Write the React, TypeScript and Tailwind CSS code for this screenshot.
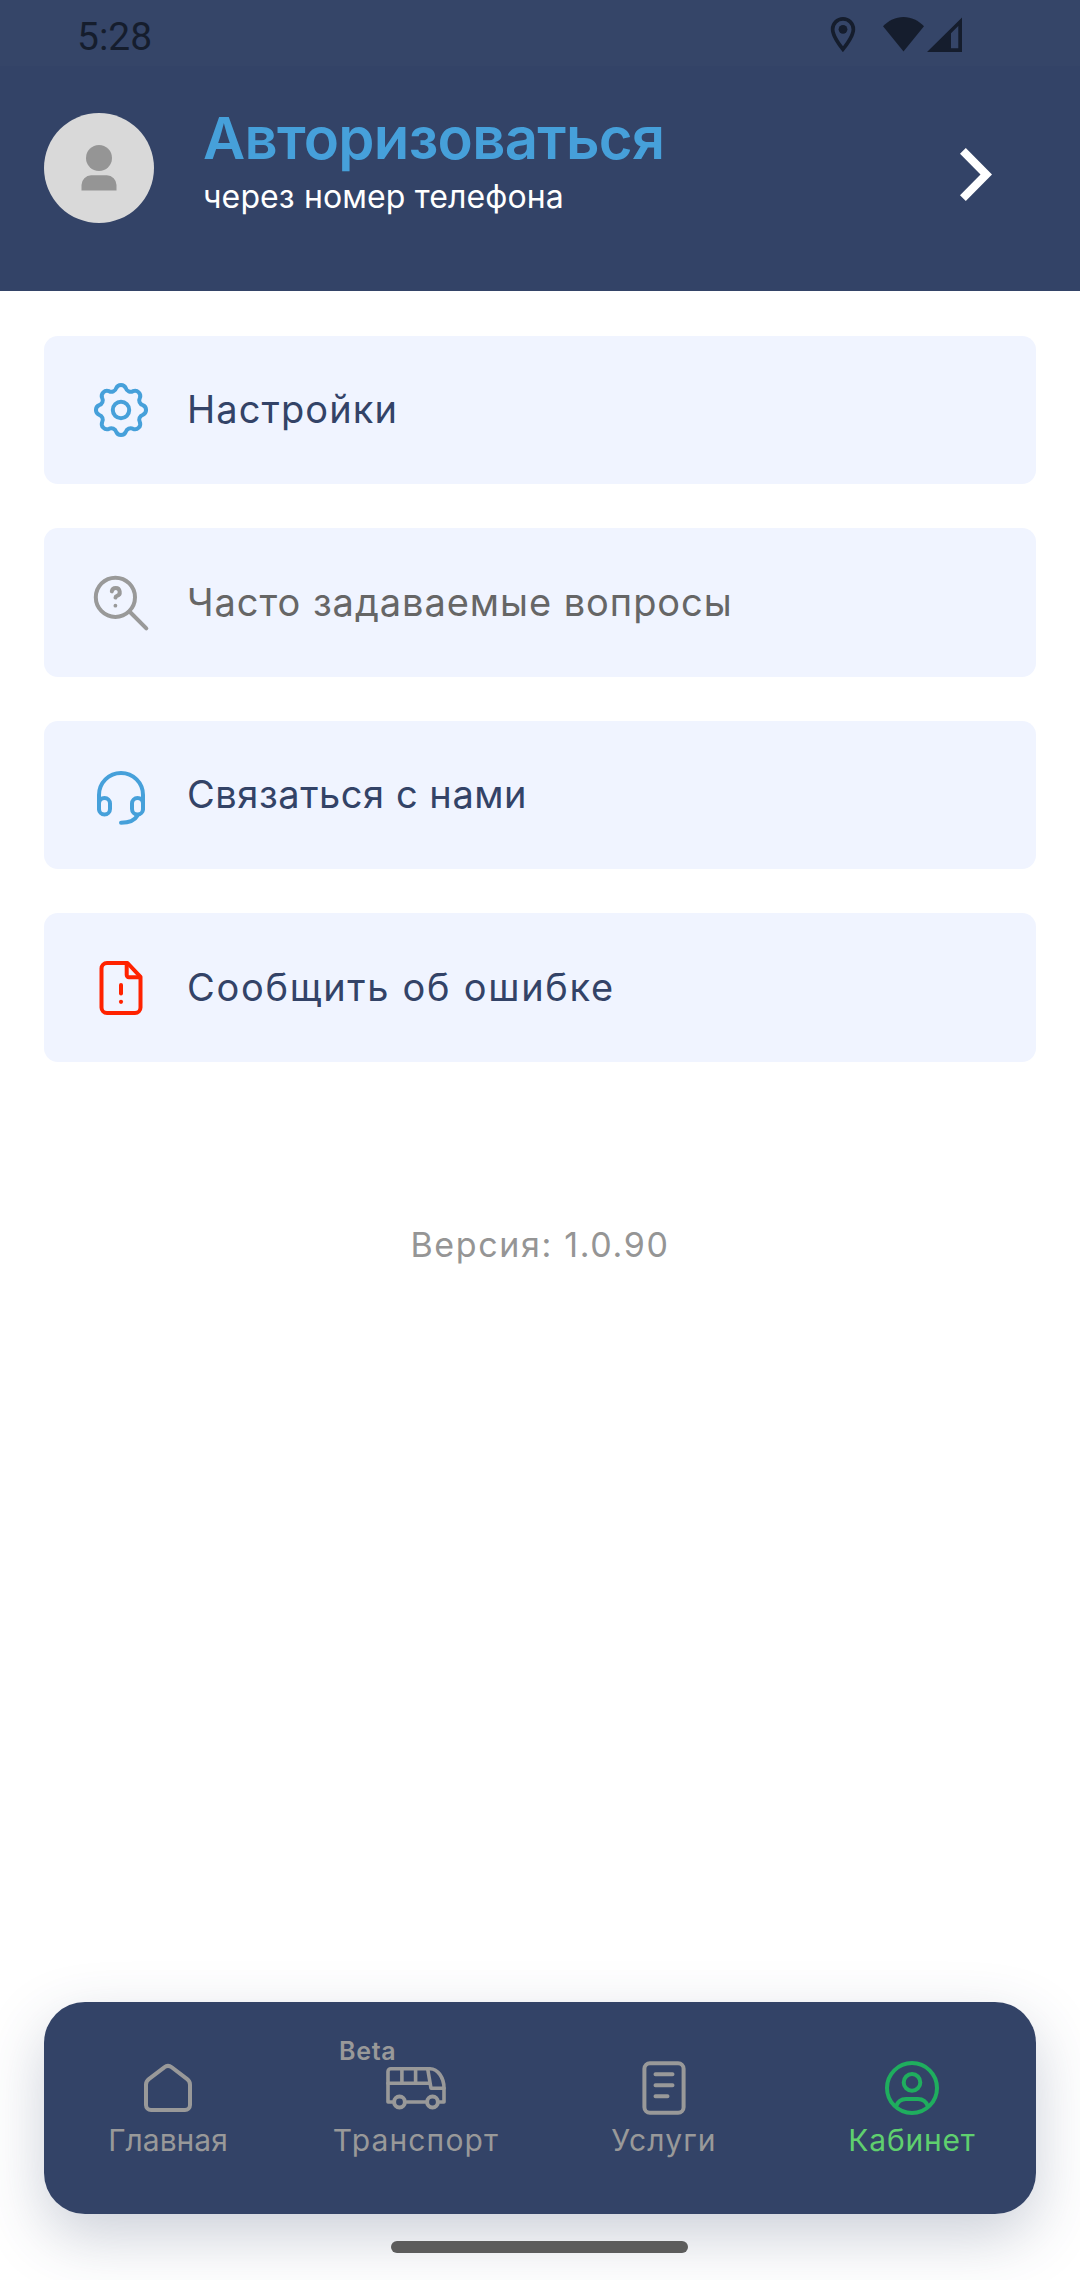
import React from 'react';

interface MenuItem {
  label: string;
  icon: React.ReactNode;
  labelClass: string;
}

interface TabItem {
  label: string;
  icon: React.ReactNode;
  labelClass: string;
  badge?: string;
}

// Eight-lobed outline of the settings gear
const gearPath = () => {
  const point = (deg: number) => {
    const rad = (deg * Math.PI) / 180;
    return `${(30 + 22.3 * Math.sin(rad)).toFixed(2)} ${(30 - 22.3 * Math.cos(rad)).toFixed(2)}`;
  };
  let d = `M${point(-12.5)}`;
  for (let i = 0; i < 8; i++) {
    d += `A5.2 5.2 0 0 1 ${point(i * 45 + 12.5)}A5 5 0 0 0 ${point(i * 45 + 32.5)}`;
  }
  return d + 'Z';
};

const Icon: React.FC<{ className: string; children: React.ReactNode }> = ({ className, children }) => (
  <svg
    viewBox="0 0 60 60"
    className={`h-[60px] w-[60px] shrink-0 ${className}`}
    fill="none"
    stroke="currentColor"
    strokeWidth="4"
    strokeLinecap="round"
    strokeLinejoin="round"
  >
    {children}
  </svg>
);

const menuItems: MenuItem[] = [
  {
    label: 'Настройки',
    labelClass: 'text-[#334367] tracking-[1.1px]',
    icon: (
      <Icon className="text-[#46a0da]">
        <path d={gearPath()} />
        <circle cx="30" cy="30" r="8.2" />
      </Icon>
    ),
  },
  {
    label: 'Часто задаваемые вопросы',
    labelClass: 'text-[#666666] tracking-[0.95px]',
    icon: (
      <Icon className="text-[#999999]">
        <circle cx="24.4" cy="24.3" r="19.6" />
        <path d="M38.5 38.5 55.3 55.3" />
        <path d="M20.8 18.4a4 4 0 1 1 5.2 4.5q-1.4.5-1.5 1.7" />
        <circle cx="24.4" cy="32.7" r="1.9" fill="currentColor" stroke="none" />
      </Icon>
    ),
  },
  {
    label: 'Связаться с нами',
    labelClass: 'text-[#334367] tracking-[0.55px]',
    icon: (
      <Icon className="text-[#46a0da]">
        <path d="M8 44V30a22 22 0 0 1 44 0v14" />
        <rect x="8" y="33" width="11" height="16.5" rx="5.5" />
        <rect x="41" y="33" width="11" height="16.5" rx="5.5" />
        <path d="M46.5 50.5C44 55 38 57.7 30 57.7" />
      </Icon>
    ),
  },
  {
    label: 'Сообщить об ошибке',
    labelClass: 'text-[#334367] tracking-[1.7px]',
    icon: (
      <Icon className="text-[#ff2200]">
        <path d="M36.5 5H16a5.5 5.5 0 0 0-5.5 5.5v39A5.5 5.5 0 0 0 16 55h28a5.5 5.5 0 0 0 5.5-5.5V18.8Z" />
        <path d="M35.7 5.5V17a2.2 2.2 0 0 0 2.2 2.2h11" />
        <path d="M30 27v8.5" />
        <circle cx="30" cy="43.8" r="2.1" fill="currentColor" stroke="none" />
      </Icon>
    ),
  },
];

const tabs: TabItem[] = [
  {
    label: 'Главная',
    labelClass: 'text-[#999999]',
    icon: (
      <Icon className="text-[#999999]">
        <path d="M26.3 9.3a6 6 0 0 1 7.4 0L49.2 21.2a7 7 0 0 1 2.8 5.6V47a5 5 0 0 1-5 5H13a5 5 0 0 1-5-5V26.8a7 7 0 0 1 2.8-5.6Z" />
      </Icon>
    ),
  },
  {
    label: 'Транспорт',
    labelClass: 'text-[#999999] tracking-[1.15px]',
    badge: 'Beta',
    icon: (
      <Icon className="text-[#999999]">
        <path d="M6.5 44H2V13.5a2.8 2.8 0 0 1 2.8-2.8H44C52 10.7 58 20 58 30v14h-4.5M21 44h18.5" strokeWidth="3.6" />
        <path d="M2 25.3h41.5M15.9 11v14M29.6 11v14M41.7 11 45 30.3h13" strokeWidth="3.6" />
        <circle cx="13.5" cy="44" r="5.4" />
        <circle cx="46.5" cy="44" r="5.4" />
      </Icon>
    ),
  },
  {
    label: 'Услуги',
    labelClass: 'text-[#999999] tracking-[1.1px]',
    icon: (
      <Icon className="text-[#999999]">
        <rect x="10.4" y="5.2" width="39.2" height="49.6" rx="5.5" />
        <path d="M21.5 16.2h17M21.5 27.3h17M21.5 38.3h12" />
      </Icon>
    ),
  },
  {
    label: 'Кабинет',
    labelClass: 'text-[#5fd06e] tracking-[0.8px]',
    icon: (
      <Icon className="text-[#1fae5e]">
        <circle cx="30" cy="30" r="25" />
        <circle cx="30" cy="24.4" r="8.3" />
        <path d="M14 48.5c1.6-4.5 5-7.5 10-7.5h12c5 0 8.4 3 10 7.5" />
      </Icon>
    ),
  },
];

const StatusBar: React.FC = () => (
  <div className="flex h-[66px] items-start justify-between bg-[#354568] pr-[116px] pl-[77px] text-[#151d2d]">
    <span className="pt-[15px] font-[Roboto,sans-serif] text-[39px] leading-[44px]">5:28</span>
    <svg viewBox="0 0 134 36" className="mt-[17px] h-9 w-[134px]" fill="currentColor">
      <path
        fillRule="evenodd"
        d="M13 0A12.2 12.2 0 0 0 .8 12.2C.8 21.3 13 35 13 35s12.2-13.7 12.2-22.8A12.2 12.2 0 0 0 13 0Zm0 3.7a8.5 8.5 0 0 1 8.5 8.5c0 4.9-4.8 12.2-8.5 17-3.7-4.8-8.5-12.1-8.5-17A8.5 8.5 0 0 1 13 3.7Z"
      />
      <circle cx="13" cy="12.3" r="4.4" />
      <path d="M53 9.3C58.5 3.5 65.5 0 73.5 0S88.5 3.5 94 9.3L73.5 34.5Z" />
      <path fillRule="evenodd" d="M97 35 132 .5V35ZM121 31.3h7.3V9L121 16.3Z" />
    </svg>
  </div>
);

const Header: React.FC = () => (
  <div className="flex h-[225px] items-start bg-[#334367] pl-11">
    <div className="mt-[47px] flex h-[110px] w-[110px] items-center justify-center rounded-full bg-[#d9d9d9]">
      <svg viewBox="0 0 36 46" className="h-[46px] w-9" fill="#959595">
        <circle cx="18" cy="13" r="13" />
        <path d="M.5 45.5V40A9.7 9.7 0 0 1 10.2 30.3H25.8A9.7 9.7 0 0 1 35.5 40V45.5Z" />
      </svg>
    </div>
    <div className="mt-[37px] ml-[49px] flex-1">
      <div className="text-[58px] leading-[70px] font-semibold tracking-[-0.7px] text-[#46a0da]">Авторизоваться</div>
      <div className="mt-[4px] text-[32px] leading-[40px] tracking-[0.12px] text-white">через номер телефона</div>
    </div>
    <svg viewBox="0 0 32 53" className="mt-[82px] mr-[88px] h-[53px] w-8" fill="white">
      <path d="M5.8 0 32 26.5 5.8 53 0 47.2 20.5 26.5 0 5.8Z" />
    </svg>
  </div>
);

const App: React.FC = () => {
  return (
    <div className="flex h-[2280px] w-[1080px] flex-col overflow-hidden bg-white font-[Inter,sans-serif]">
      <StatusBar />
      <Header />

      {/* Menu */}
      <div className="flex flex-col gap-[44.2px] px-11 pt-[45px]">
        {menuItems.map((item) => (
          <div key={item.label} className="flex h-[148.3px] items-center gap-9 rounded-[14px] bg-[#f0f4ff] pl-[47px]">
            {item.icon}
            <span className={`-mt-[2px] text-[38px] leading-[48px] whitespace-nowrap ${item.labelClass}`}>
              {item.label}
            </span>
          </div>
        ))}
      </div>

      <div className="mt-[161px] text-center text-[34px] leading-[44px] tracking-[1.65px] text-[#959595]">
        Версия: 1.0.90
      </div>

      {/* Bottom navigation */}
      <div className="mx-11 mt-auto grid h-[212px] shrink-0 grid-cols-4 rounded-[41px] bg-[#334367] shadow-[0_22px_60px_rgba(51,67,103,0.25)]">
        {tabs.map((tab) => (
          <div key={tab.label} className="relative flex flex-col items-center pt-14">
            {tab.badge && (
              <span className="absolute top-[33px] left-[47px] text-[25px] leading-[32px] font-semibold tracking-[0.7px] text-[#999999]">
                {tab.badge}
              </span>
            )}
            {tab.icon}
            <span className={`mt-[2px] text-[30px] leading-[40px] ${tab.labelClass}`}>{tab.label}</span>
          </div>
        ))}
      </div>

      {/* Gesture handle */}
      <div className="mt-[27px] mb-[27px] ml-[391px] h-3 w-[297px] shrink-0 rounded-full bg-[#5c5c5c]" />
    </div>
  );
};

export default App;
